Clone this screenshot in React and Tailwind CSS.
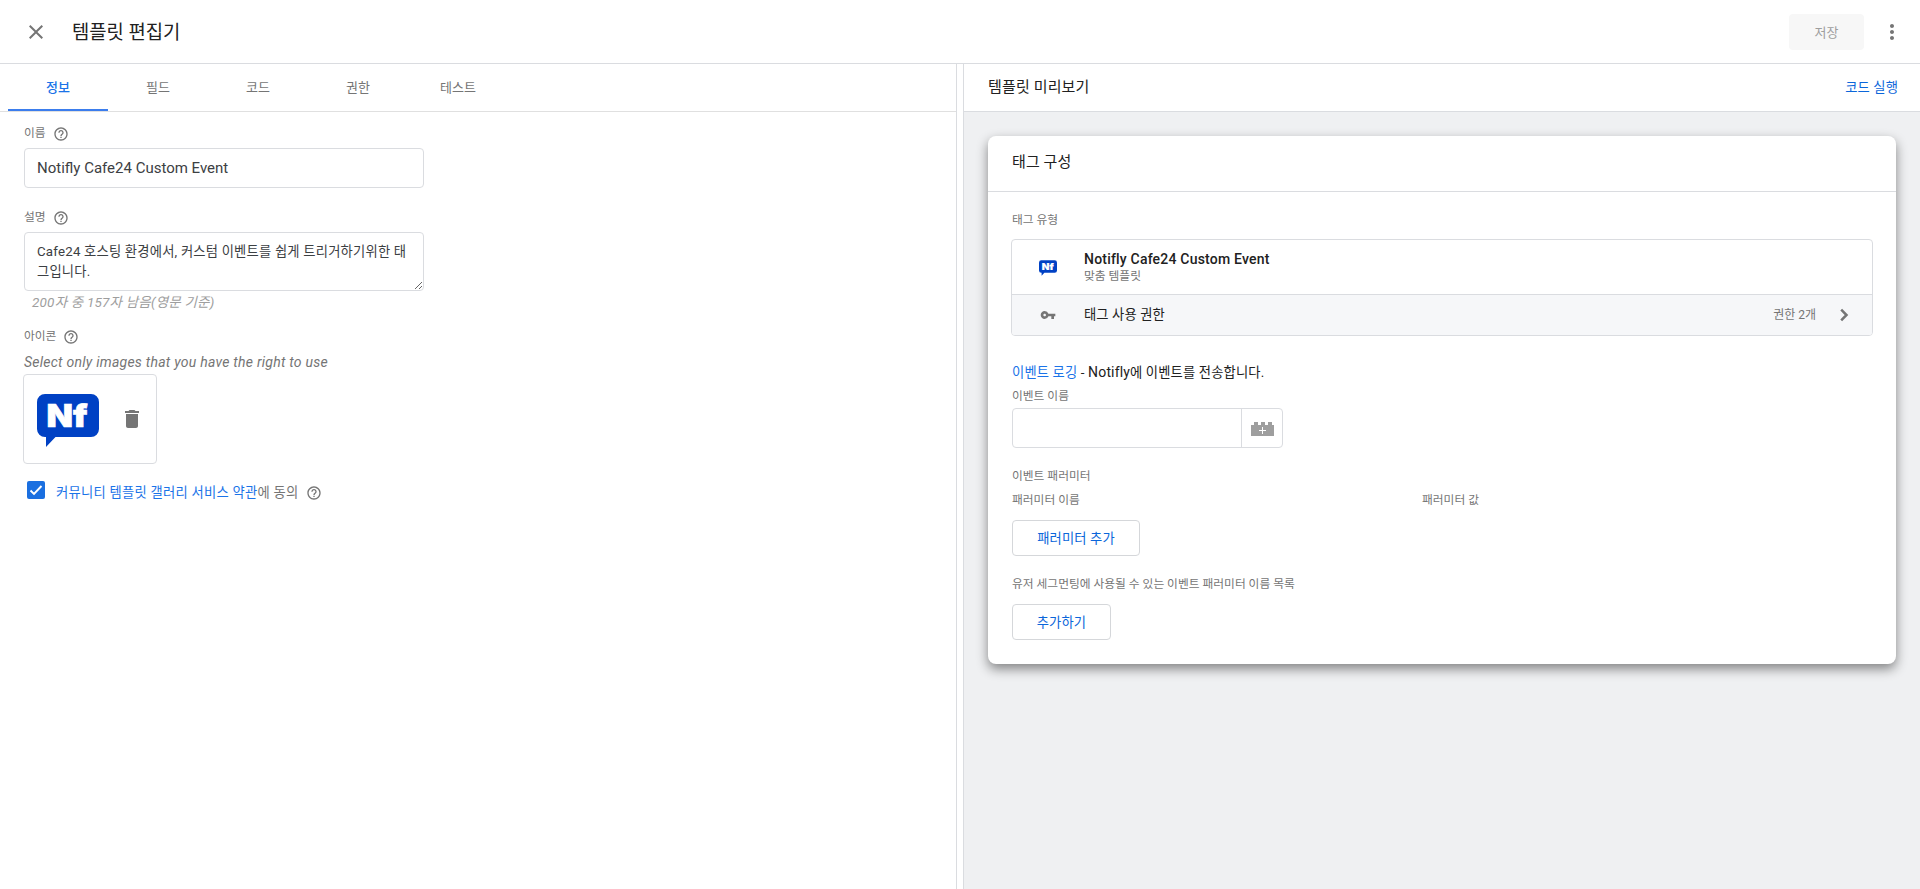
import React from "react";
import { MdClose, MdMoreVert, MdHelpOutline, MdDelete, MdVpnKey } from "react-icons/md";

const tabs = ["정보", "필드", "코드", "권한", "테스트"];

function Logo({ className }) {
  return (
    <svg viewBox="0 0 62 53" className={className} aria-hidden="true">
      <path fill="#0041c4" d="M8 0H54a8 8 0 0 1 8 8V35a8 8 0 0 1-8 8H18.500L9 53V43H8a8 8 0 0 1-8-8V8a8 8 0 0 1 8-8Z" />
      <text x="9.500" y="33" fill="#fff" stroke="#fff" strokeWidth="0.600" fontFamily="Inter, sans-serif" fontWeight="900" fontSize="31.500" textLength="41" lengthAdjust="spacingAndGlyphs">Nf</text>
    </svg>
  );
}

function Label({ children }) {
  return (
    <div className="flex items-center text-[11.75px] text-[#757575]">
      <span className="leading-4">{children}</span>
      <MdHelpOutline className="relative top-px ml-[7px] size-4 text-[#757575]" />
    </div>
  );
}

function OutlineButton({ children, className }) {
  return (
    <button className={`flex h-9 items-center justify-center rounded border border-[#d5d7da] pt-0.5 text-[13.3px] tracking-[0.15px] text-[#0b66da] ${className}`}>
      {children}
    </button>
  );
}

export default function App() {
  return (
    <div className="flex h-[889px] w-[1920px] flex-col overflow-hidden bg-white font-['Roboto','Noto_Sans_CJK_KR',sans-serif] text-[#212121]">
      <header className="flex h-16 shrink-0 items-center border-b border-[#dadce0] pl-6">
        <MdClose className="size-6 text-[#757575]" />
        <h1 className="ml-6 pt-[3px] text-[18.8px] leading-6">템플릿 편집기</h1>
        <button className="ml-auto mr-4 flex h-9 w-[75px] items-center justify-center rounded bg-[#f7f7f7] pt-0.5 text-[13px] text-[#9e9e9e]">저장</button>
        <MdMoreVert className="mr-4 size-6 text-[#757575]" />
      </header>

      <div className="flex min-h-0 flex-1">
        <main className="w-[957px] shrink-0 border-r border-[#dadce0]">
          <nav className="flex h-12 border-b border-[#e0e0e0] pl-2">
            {tabs.map((t, i) => (
              <div
                key={t}
                className={
                  i === 0
                    ? "flex w-[100px] items-center justify-center border-b-2 border-[#3b7ded] pt-0.5 text-[13px] font-medium text-[#1a73e8]"
                    : "flex w-[100px] items-center justify-center border-b-2 border-transparent pt-0.5 text-[13px] text-[#757575]"
                }
              >
                {t}
              </div>
            ))}
          </nav>

          <div className="flex flex-col items-start pl-6">
            <div className="h-9 pt-[13px]"><Label>이름</Label></div>
            <div className="flex h-10 w-[400px] items-center rounded border border-[#dadce0] pl-3 text-[15px] text-[#3c4043]">
              Notifly Cafe24 Custom Event
            </div>
            <div className="h-11 pt-[21px]"><Label>설명</Label></div>
            <textarea
              readOnly
              className="block h-[59px] w-[400px] overflow-hidden rounded border border-[#dadce0] px-3 pb-1 pt-[9px] text-[13.3px] leading-5 tracking-[0.2px] break-all text-[#3c4043] outline-none"
              value="Cafe24 호스팅 환경에서, 커스텀 이벤트를 쉽게 트리거하기위한 태그입니다."
            />
            <p className="-mt-px ml-2 text-[13.5px] italic leading-6 tracking-[0.2px] text-[#9e9e9e]">200자 중 157자 남음(영문 기준)</p>
            <div className="mt-3.5"><Label>아이콘</Label></div>
            <p className="mt-1.5 text-sm italic leading-6 tracking-[0.25px] text-[#757575]">Select only images that you have the right to use</p>
            <div className="-ml-px flex h-[90px] w-[134px] items-center rounded border border-[#dadce0] pl-[13px]">
              <Logo className="mt-0.5 h-[53px] w-[62px]" />
              <MdDelete className="ml-[21px] size-6 text-[#757575]" />
            </div>
            <div className="mt-[18px] flex h-5 items-center pl-[3px] text-[13.3px] tracking-[0.25px] text-[#757575]">
              <span className="mb-1 flex size-[18px] items-center justify-center rounded-xs bg-[#1a6fe0]">
                <svg viewBox="0 0 18 18" className="size-[18px]"><path d="M3.500 9.500 7 13l7.500-8" fill="none" stroke="#fff" strokeWidth="1.900" /></svg>
              </span>
              <span className="ml-[11px] pt-0.5"><a className="text-[#1a73e8]">커뮤니티 템플릿 갤러리 서비스 약관</a>에 동의</span>
              <MdHelpOutline className="ml-2 mt-0.5 size-4" />
            </div>
          </div>
        </main>

        <div className="w-[7px] shrink-0 border-r border-[#dadce0]" />

        <section className="flex flex-1 flex-col bg-[#eff0f2]">
          <div className="flex h-12 items-center justify-between border-b border-[#dadce0] bg-white pl-6 pr-[22px]">
            <h2 className="text-[15px] tracking-[0.15px]">템플릿 미리보기</h2>
            <a className="text-[13.3px] tracking-[0.1px] text-[#0b66da]">코드 실행</a>
          </div>

          <div className="mx-6 mt-6 h-[528px] rounded-lg bg-white shadow-[0_5px_12px_rgba(0,0,0,0.45)]">
            <div className="flex h-14 items-center border-b border-[#dadce0] pb-0.5 pl-6 text-[15px] tracking-[0.1px]">태그 구성</div>
            <div className="flex flex-col items-start px-[23px] pt-5 text-[11.75px] text-[#757575]">
              <span className="pl-px leading-4">태그 유형</span>
              <div className="mt-[11px] w-full overflow-hidden rounded border border-[#dadce0]">
                <div className="flex h-[55px] items-center border-b border-[#dadce0] pl-[27px]">
                  <Logo className="mt-px h-4 w-[18px]" />
                  <div className="ml-[27px] flex flex-col">
                    <span className="text-sm font-medium leading-4 tracking-[0.2px] text-[#212121]">Notifly Cafe24 Custom Event</span>
                    <span className="mt-px leading-4">맞춤 템플릿</span>
                  </div>
                </div>
                <div className="flex h-10 items-center bg-[#f6f7f9] pl-7 pr-4">
                  <MdVpnKey className="size-4" />
                  <span className="ml-7 text-[13.3px] tracking-[0.1px] text-[#212121]">태그 사용 권한</span>
                  <span className="ml-auto mr-4 text-xs">권한 2개</span>
                  <svg viewBox="0 0 24 24" className="size-6" aria-hidden="true">
                    <path d="M9.200 6.700 14.500 12 9.200 17.300" fill="none" stroke="currentColor" strokeWidth="2.500" />
                  </svg>
                </div>
              </div>
              <p className="ml-px mt-[26px] h-5 text-[13.3px] leading-5 tracking-[0.15px] text-[#212121]"><a className="text-[#1a73e8]">이벤트 로깅</a> - <span className="text-sm leading-5">Notifly</span>에 이벤트를 전송합니다.</p>
              <span className="ml-px mt-1.5 leading-4">이벤트 이름</span>
              <div className="ml-px mt-1 flex h-10 w-[271px] rounded border border-[#dadce0]">
                <div className="w-[229px] border-r border-[#dadce0]" />
                <div className="flex flex-1 items-center justify-center">
                  <svg viewBox="0 0 23 14" className="mt-0.5 h-3.5 w-[23px]" shapeRendering="crispEdges">
                    <path fill="#9e9e9e" d="M0 3H3V0H7V3H10V0H14V3H17V0H21V3H23V14H0Z" />
                    <path stroke="#fff" d="M8 8.500H15M11.500 5V12" />
                  </svg>
                </div>
              </div>
              <span className="ml-px mt-5 leading-4">이벤트 패러미터</span>
              <div className="ml-px mt-2 flex leading-4"><span className="w-[410px]">패러미터 이름</span><span>패러미터 값</span></div>
              <OutlineButton className="ml-px mt-3 w-[128px]">패러미터 추가</OutlineButton>
              <span className="ml-px mt-5 leading-4">유저 세그먼팅에 사용될 수 있는 이벤트 패러미터 이름 목록</span>
              <OutlineButton className="ml-px mt-3 w-[99px]">추가하기</OutlineButton>
            </div>
          </div>
        </section>
      </div>
    </div>
  );
}
